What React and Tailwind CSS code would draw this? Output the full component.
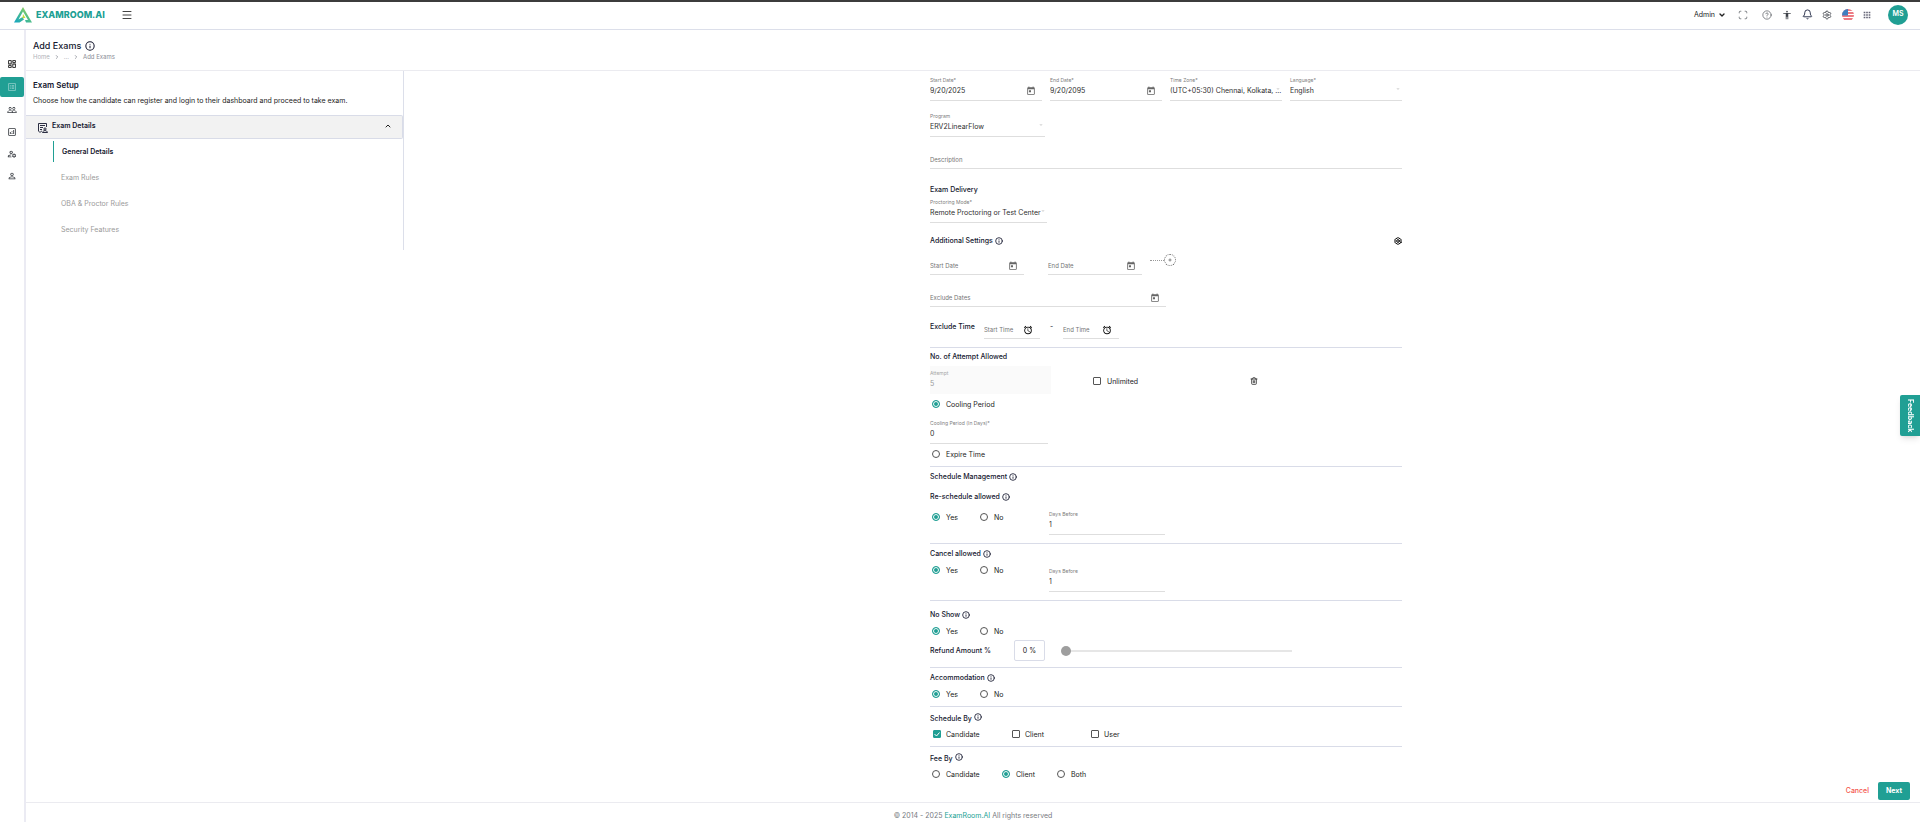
import { useState } from "react";
import { Menu, Scan, Bell, Bolt, ChevronDown, ChevronUp, ChevronRight, CircleHelp, Info, Settings, Trash2, Plus } from "lucide-react";
import {
  MdToday,
  MdAlarm,
  MdAccessibility,
  MdApps,
  MdArrowDropDown,
  MdListAlt,
  MdOutlineAnalytics,
  MdOutlineDashboard,
  MdOutlineManageAccounts,
  MdPeopleOutline,
  MdPersonOutline,
} from "react-icons/md";

const Logo = () => (
  <a href="#" className="flex items-center gap-1">
    <svg viewBox="0 0 36 32" className="w-[18px] h-4">
      <defs>
        <linearGradient id="logo" x1="0" y1="1" x2="1" y2="0">
          <stop offset="0" stopColor="#12a5c4" />
          <stop offset="0.5" stopColor="#4dbd8c" />
          <stop offset="1" stopColor="#c6dc3a" />
        </linearGradient>
      </defs>
      <path d="M18 0 36 31H24l-2-5h6L18 9 9 25l8-5 3 5-9 6H0Z" fill="url(#logo)" />
      <path d="m18 14 5 8h-6Z" fill="#c6dc3a" />
    </svg>
    <span className="text-[9px] leading-4 font-extrabold text-[#209f94]">EXAMROOM.AI</span>
  </a>
);

const Flag = () => (
  <svg viewBox="0 0 24 24" className="size-3">
    <clipPath id="flag">
      <circle cx="12" cy="12" r="12" />
    </clipPath>
    <g clipPath="url(#flag)">
      <rect width="24" height="24" fill="#fff" />
      <path d="M0 2h24M0 8h24M0 14h24M0 20h24" stroke="#e8505b" strokeWidth="3" />
      <rect width="12" height="13" fill="#3f7fc0" />
    </g>
  </svg>
);

const Header = () => (
  <header className="flex items-center justify-between h-[30px] pl-[14px] pr-3 pb-[2px] border-t-2 border-t-[#3c3c3c] border-b border-b-[#dcdfea]">
    <div className="flex items-center gap-4">
      <Logo />
      <button aria-label="Toggle menu">
        <Menu className="size-3 text-[#444]" />
      </button>
    </div>
    <div className="flex items-center text-[#3d4148]">
      <button className="flex items-center gap-[3px] text-[7px] leading-3 text-[#222] mr-3">
        Admin
        <ChevronDown className="size-2" strokeWidth={4} />
      </button>
      <div className="flex items-center gap-2">
        <button aria-label="Full screen" className="w-3 mr-1"><Scan className="size-[10px]" strokeWidth={1.5} /></button>
        <button aria-label="Help" className="w-3"><CircleHelp className="size-[10px]" strokeWidth={1.5} /></button>
        <button aria-label="Accessibility" className="w-3"><MdAccessibility className="size-[10px]" /></button>
        <button aria-label="Notifications" className="w-3"><Bell className="size-[11px] text-[#1b2340]" /></button>
        <button aria-label="Settings" className="w-3"><Settings className="size-[10px]" /></button>
        <button aria-label="Change language" className="w-3"><Flag /></button>
        <button aria-label="Apps" className="w-3"><MdApps className="size-[10px] text-[#667]" /></button>
      </div>
      <button className="ml-[14px] size-5 rounded-full bg-[#209f94] text-white text-[7px] font-semibold">MS</button>
    </div>
  </header>
);

const navItems = [
  { label: "Dashboard", icon: MdOutlineDashboard, color: "text-black" },
  { label: "Exams", icon: MdListAlt, active: true },
  { label: "Candidates", icon: MdPeopleOutline },
  { label: "Reports", icon: MdOutlineAnalytics },
  { label: "Manage", icon: MdOutlineManageAccounts },
  { label: "Profile", icon: MdPersonOutline },
];

const Sidebar = () => (
  <nav className="shrink-0 w-[26px] border-r-2 border-[#ebebf3] pt-6 flex flex-col gap-[2px]">
    {navItems.map(({ label, icon: Icon, active, color }) => (
      <a
        key={label}
        href="#"
        aria-label={label}
        className={`flex items-center justify-center h-5 rounded-[2px] ${
          active ? "my-px bg-[#209f94] text-[#8fd0ca]" : color || "text-[#33373d]"
        }`}
      >
        <Icon className="size-[10px]" />
      </a>
    ))}
  </nav>
);

const PageTitle = () => (
  <div className="h-[41px] pl-[7px] pt-[10px] border-b border-[#ebebf0]">
    <h1 className="flex items-center gap-1 text-[9px] leading-3 font-medium text-[#14172e]">
      Add Exams <Info className="size-[10px]" strokeWidth={2.5} />
    </h1>
    <div className="flex items-center gap-1 text-[6px] leading-[10px] text-[#8a8d96]">
      <a href="#" className="text-[#b0b2b8]">Home</a>
      <ChevronRight className="size-[6px]" strokeWidth={3} />
      <span>...</span>
      <ChevronRight className="size-[6px]" strokeWidth={3} />
      <span>Add Exams</span>
    </div>
  </div>
);

const steps = ["Exam Rules", "OBA & Proctor Rules", "Security Features"];

const SetupPanel = () => (
  <aside className="self-start shrink-0 w-[378px] pb-[10px] border-r border-[#dcdfea]">
    <div className="pl-[7px] pt-2 pb-2">
      <h2 className="text-[8px] leading-3 font-semibold text-[#14172e]">Exam Setup</h2>
      <p className="mt-1 text-[7px] leading-3 text-[#222]">
        Choose how the candidate can register and login to their dashboard and proceed to take exam.
      </p>
    </div>
    <button className="flex items-center w-full h-6 pl-3 pr-[10px] pb-[2px] gap-1 bg-[#f2f2f2] border border-l-0 border-[#d9dce8] rounded-r-[2px]">
      <svg viewBox="0 0 20 20" className="self-end size-[10px] text-[#14172e] mb-[3px]" fill="none" stroke="currentColor" strokeWidth="1.8">
        <path d="M17 8V1H1v15l3 3 3-3h1M4 5h10M4 9h6M4 13h4" />
        <circle cx="14" cy="12" r="2.2" />
        <path d="M9 19c1-5 9-5 10 0Z" />
      </svg>
      <span className="text-[7px] leading-3 font-semibold text-[#14172e]">Exam Details</span>
      <ChevronUp className="ml-auto size-2 text-[#222]" strokeWidth={3} />
    </button>
    <ul className="pt-[2px] pl-[27px] text-[7px] text-[#9a9a9a]">
      <li className="h-[21px] pl-2 leading-[21px] border-l border-[#209f94] font-semibold text-[#14172e]">
        <a href="#">General Details</a>
      </li>
      {steps.map((step) => (
        <li key={step} className="h-[26px] pl-2 pt-[5px] leading-[21px]">
          <a href="#">{step}</a>
        </li>
      ))}
    </ul>
  </aside>
);

const Heading = ({ children, info, align = "items-center" }) => (
  <h3 className={`flex ${align} gap-[2px] text-[7px] leading-3 font-medium text-[#14172e]`}>
    {children}
    {info && <Info className="size-2" strokeWidth={2.5} />}
  </h3>
);

const Divider = () => <hr className="border-0 h-px bg-[#d9dce8]" />;

// Field with a small floating label above its value
const Field = ({ id, label, value, options, icon: Icon, disabled, className = "" }) => (
  <div className={`flex flex-col border-b border-[#dedede] pb-[3px] ${className}`}>
    <label htmlFor={id} className={`text-[5px] leading-2 ${disabled ? "text-[#a8a8a8]" : "text-[#7d7d7d]"}`}>{label}</label>
    <div className="flex items-center h-3 mt-px">
      {options ? (
        <select id={id} className="appearance-none grow min-w-0 text-[7px] leading-3 text-[#2f2f2f] outline-none">
          {options.map((o) => <option key={o}>{o}</option>)}
        </select>
      ) : (
        <input
          id={id}
          defaultValue={value}
          disabled={disabled}
          className="grow min-w-0 text-[7px] leading-3 text-[#2f2f2f] disabled:text-[#9a9a9a] outline-none"
        />
      )}
      {options && <MdArrowDropDown className="shrink-0 self-start size-2 -ml-2 text-[#d5d5d5] pointer-events-none" />}
      {Icon && <button type="button" aria-label={`Open ${label}`} className="mr-[6px]"><Icon className="size-[10px] text-[#666]" /></button>}
    </div>
  </div>
);

// Empty field, the label sits where the value goes
const EmptyField = ({ id, label, icon: Icon, iconClass = "mr-[6px] text-[#666]", className }) => (
  <div className={`flex items-center h-4 pb-px border-b border-[#dedede] ${className}`}>
    <input
      id={id}
      aria-label={label}
      placeholder={label}
      className="grow min-w-0 text-[6px] leading-3 placeholder:text-[#757575] outline-none"
    />
    {Icon && <button type="button" aria-label={`Open ${label}`} className={iconClass}><Icon className="size-[10px]" /></button>}
  </div>
);

const Radio = ({ name, label, checked, className = "w-12" }) => (
  <label className={`flex items-center gap-[6px] pl-[2px] h-3 text-[7px] leading-3 text-[#222] ${className}`}>
    <input
      type="radio"
      name={name}
      defaultChecked={checked}
      className="appearance-none shrink-0 size-2 rounded-full border border-[#555] checked:border-[#209f94] checked:bg-[#209f94] checked:shadow-[inset_0_0_0_1px_white]"
    />
    <span className="pt-[2px]">{label}</span>
  </label>
);

const Checkbox = ({ label, checked, className = "" }) => {
  const [on, setOn] = useState(!!checked);
  return (
    <label className={`relative flex items-center gap-[5px] h-3 text-[7px] leading-3 text-[#222] ${className}`}>
      <input
        type="checkbox"
        checked={on}
        onChange={() => setOn(!on)}
        className="appearance-none shrink-0 size-2 rounded-[1px] border border-[#555] checked:border-[#209f94] checked:bg-[#209f94]"
      />
      {on && (
        <svg viewBox="0 0 8 8" className="absolute left-0 size-2 pointer-events-none" fill="none" stroke="#fff">
          <path d="m1.5 4 2 2 3-3.5" />
        </svg>
      )}
      <span className="pt-[2px]">{label}</span>
    </label>
  );
};

const YesNo = ({ name }) => (
  <div className="flex">
    <Radio name={name} label="Yes" checked />
    <Radio name={name} label="No" />
  </div>
);

const ExamForm = () => {
  const [refund, setRefund] = useState(0);

  return (
    <form className="w-full max-w-[472px] pt-[5px]">
      <div className="grid grid-cols-4 gap-2">
        <Field id="start" label="Start Date*" value="9/20/2025" icon={MdToday} />
        <Field id="end" label="End Date*" value="9/20/2095" icon={MdToday} />
        <Field id="zone" label="Time Zone*" options={["(UTC+05:30) Chennai, Kolkata, ..."]} />
        <Field id="language" label="Language*" options={["English"]} />
      </div>
      <Field id="program" label="Program" options={["ERV2LinearFlow"]} className="w-[115px] mt-[11px]" />
      <EmptyField id="description" label="Description" className="mt-4 mb-[15px]" />

      <Heading>Exam Delivery</Heading>
      <Field id="mode" label="Proctoring Mode*" options={["Remote Proctoring or Test Center"]} className="w-[117px] mt-[2px] mb-3" />

      <div className="flex items-center justify-between mb-3">
        <Heading info>Additional Settings</Heading>
        <button type="button" aria-label="Additional settings options">
          <Bolt className="size-2 text-black" strokeWidth={3} />
        </button>
      </div>
      <div className="flex">
        <EmptyField id="window-start" label="Start Date" icon={MdToday} className="w-[94px]" />
        <EmptyField id="window-end" label="End Date" icon={MdToday} className="w-[94px] ml-6" />
        <div className="flex items-center h-3 ml-2 -mt-[5px]">
          <span className="w-[14px] border-t border-dotted border-[#999]" />
          <button type="button" aria-label="Add dates" className="flex items-center justify-center size-3 rounded-full border border-dotted border-[#666]">
            <Plus className="size-1 text-[#555]" strokeWidth={4} />
          </button>
        </div>
      </div>
      <EmptyField id="exclude-dates" label="Exclude Dates" icon={MdToday} className="w-1/2 mt-4" />
      <div className="flex items-start mt-4 mb-2 text-[7px] font-medium text-[#14172e]">
        <h3 className="w-[54px] leading-2">Exclude Time</h3>
        <EmptyField id="time-start" label="Start Time" icon={MdAlarm} iconClass="mr-[7px] text-black" className="w-14 font-normal" />
        <span className="w-[23px] text-center leading-2 font-normal">-</span>
        <EmptyField id="time-end" label="End Time" icon={MdAlarm} iconClass="mr-[7px] text-black" className="w-14 font-normal" />
      </div>
      <Divider />

      <div className="pt-[3px] pb-[6px]">
        <Heading>No. of Attempt Allowed</Heading>
        <div className="flex mt-[3px] mb-1">
          <div className="w-[121px] pt-[3px] bg-[#fafafa]">
            <Field id="attempt" label="Attempt" value="5" disabled className="border-transparent" />
          </div>
          <div className="flex items-center pt-[2px]">
            <Checkbox label="Unlimited" className="ml-[42px] gap-[6px]" />
            <button aria-label="Delete attempt" type="button" className="ml-28">
              <Trash2 className="size-2 text-[#333]" strokeWidth={2.5} />
            </button>
          </div>
        </div>
        <Radio name="period" label="Cooling Period" checked className="w-fit" />
        <Field id="cooling" label="Cooling Period (In Days)*" value="0" className="w-[118px] mt-[9px] mb-1" />
        <Radio name="period" label="Expire Time" className="w-fit" />
      </div>
      <Divider />

      <div className="pt-1 pb-2">
        <Heading info>Schedule Management</Heading>
        <div className="pt-2">
          <Heading info>Re-schedule allowed</Heading>
        </div>
        <div className="flex pt-[7px]">
          <div className="w-[119px] pt-px"><YesNo name="reschedule" /></div>
          <Field id="reschedule-days" label="Days Before" value="1" className="w-[116px]" />
        </div>
      </div>
      <Divider />

      <div className="pt-1 pb-2">
        <Heading info>Cancel allowed</Heading>
        <div className="flex pt-1">
          <div className="w-[119px]"><YesNo name="cancel" /></div>
          <Field id="cancel-days" label="Days Before" value="1" className="w-[116px] mt-[3px]" />
        </div>
      </div>
      <Divider />

      <div className="pt-2 pb-[6px]">
        <Heading info>No Show</Heading>
        <div className="pt-1 pb-[3px]"><YesNo name="noshow" /></div>
        <div className="flex items-center">
          <label htmlFor="refund" className="w-[84px] text-[7px] leading-3 font-medium text-[#14172e]">Refund Amount %</label>
          <output className="w-[31px] h-[21px] text-center text-[7px] leading-[19px] text-[#222] border border-[#d9dce8] rounded-[2px]">
            {refund} %
          </output>
          <input
            id="refund"
            type="range"
            value={refund}
            onChange={(e) => setRefund(e.target.value)}
            className="appearance-none w-[231px] h-[2px] ml-4 bg-[#e6e6e6] [&::-webkit-slider-thumb]:appearance-none [&::-webkit-slider-thumb]:size-[10px] [&::-webkit-slider-thumb]:rounded-full [&::-webkit-slider-thumb]:bg-[#9e9e9e]"
          />
        </div>
      </div>
      <Divider />

      <div className="pt-1 pb-[6px]">
        <Heading info>Accommodation</Heading>
        <div className="pt-1"><YesNo name="accommodation" /></div>
      </div>
      <Divider />

      <div className="py-[6px]">
        <Heading info align="items-start">Schedule By</Heading>
        <div className="flex pt-[3px] pl-[3px]">
          <Checkbox label="Candidate" checked className="w-[79px]" />
          <Checkbox label="Client" className="w-[79px]" />
          <Checkbox label="User" />
        </div>
      </div>
      <Divider />

      <div className="pt-[6px]">
        <Heading info align="items-start">Fee By</Heading>
        <div className="flex pt-[3px]">
          <Radio name="fee" label="Candidate" className="w-[70px]" />
          <Radio name="fee" label="Client" checked className="w-[55px]" />
          <Radio name="fee" label="Both" />
        </div>
      </div>
    </form>
  );
};

export default function App() {
  return (
    <div className="flex flex-col min-h-screen bg-white font-['Inter',sans-serif]">
      <Header />
      <div className="flex grow">
        <Sidebar />
        <div className="flex flex-col grow min-w-0">
          <PageTitle />
          <main className="flex">
            <SetupPanel />
            <div className="flex grow justify-center pl-2">
              <ExamForm />
            </div>
          </main>
          <div className="flex justify-end gap-2 pt-[2px] pb-[2px] pr-[10px] text-[7px]">
            <button className="px-px font-medium text-[#f4574d]">Cancel</button>
            <button className="w-8 h-[18px] rounded-[2px] bg-[#209f94] text-white font-bold">Next</button>
          </div>
          <footer className="mt-auto h-5 pt-[7px] border-t border-[#ebebf0] text-center text-[7px] leading-3 text-[#777a80]">
            © 2014 - 2025 <a href="#" className="text-[#209f94]">ExamRoom.AI</a> All rights reserved
          </footer>
        </div>
      </div>
      <button className="fixed right-0 top-[395px] w-5 h-[41px] rounded-l-[2px] bg-[#209f94] text-white text-[7px] font-bold shadow-md [writing-mode:vertical-rl]">
        Feedback
      </button>
    </div>
  );
}
